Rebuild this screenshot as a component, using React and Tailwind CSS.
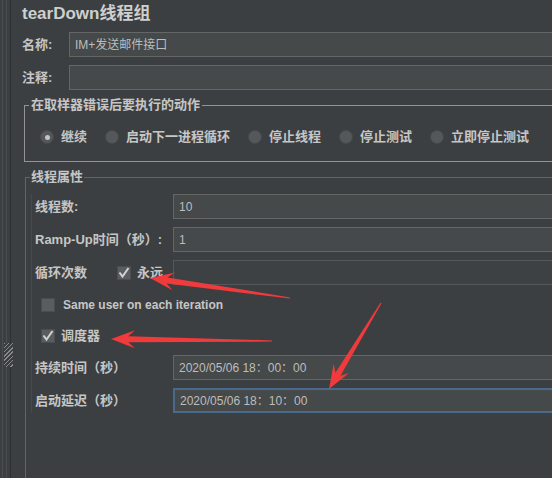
import React from 'react';

const font = "font-['Liberation_Sans','Noto_Sans_CJK_SC',sans-serif]";

// builds a tapered "screenshot tool" arrow from tail to tip
const arrowPoints = (x1, y1, x2, y2) => {
  const dx = x2 - x1;
  const dy = y2 - y1;
  const len = Math.hypot(dx, dy);
  const ux = dx / len;
  const uy = dy / len;
  const nx = -uy;
  const ny = ux;
  const hl = 24;
  const hw = 9;
  const sw = 3;
  const bx = x2 - ux * hl;
  const by = y2 - uy * hl;
  const sx = x2 - ux * hl * 0.72;
  const sy = y2 - uy * hl * 0.72;
  return [
    [x1 + nx * 0.6, y1 + ny * 0.6],
    [sx + nx * sw, sy + ny * sw],
    [bx + nx * hw, by + ny * hw],
    [x2, y2],
    [bx - nx * hw, by - ny * hw],
    [sx - nx * sw, sy - ny * sw],
    [x1 - nx * 0.6, y1 - ny * 0.6],
  ]
    .map(p => p.map(v => v.toFixed(1)).join(','))
    .join(' ');
};

const Radio = ({ checked, label }) => (
  <div className="flex items-center gap-[7px]">
    <span className="w-[14px] h-[14px] rounded-full bg-[#55585a] border border-[#47494b] flex items-center justify-center">
      {checked && <span className="w-[5px] h-[5px] rounded-full bg-[#c4c4c4]" />}
    </span>
    <span className="text-[13px] font-bold text-[#c6c6c6]">{label}</span>
  </div>
);

const Checkbox = ({ checked }) => (
  <span className="w-[14px] h-[14px] shrink-0 bg-[#5a5d5f] border border-[#4b4e50] flex items-center justify-center">
    {checked && (
      <svg width="12" height="12" viewBox="0 0 12 12">
        <polyline points="1.5,5.5 4.5,9.5 10.5,1" fill="none" stroke="#d2d2d2" strokeWidth="2" />
      </svg>
    )}
  </span>
);

const Field = ({ value, focused, disabled }) => {
  let cls = 'bg-[#45494a] border border-[#656767]';
  if (focused) cls = 'bg-[#45494a] border-2 border-[#4a6a8c]';
  if (disabled) cls = 'bg-[#3e4143] border border-[#55585a]';
  return (
    <div className={`flex-1 h-full flex items-center pl-[5px] text-[12px] text-[#bdbdbd] ${cls}`}>
      {value}
    </div>
  );
};

const Row = ({ label, children, className }) => (
  <div className={`flex items-center ${className}`}>
    <div className="w-[138px] shrink-0 text-[13px] font-bold text-[#c6c6c6]">{label}</div>
    {children}
  </div>
);

export default function App() {
  return (
    <div className={`relative w-[552px] h-[478px] overflow-hidden bg-[#3c3f41] flex ${font}`}>
      {/* splitter */}
      <div className="w-[12px] shrink-0 flex">
        <div className="w-[3px] border-r border-[#4b4e50]" />
        <div className="w-[4px] border-r border-[#4b4e50]" />
        <div className="w-[4px] border-r border-[#2e3032]" />
      </div>
      <div className="absolute left-[4px] top-[343px] w-[9px] h-[24px] bg-[repeating-linear-gradient(135deg,#8a8a8a_0px,#8a8a8a_1px,#3c3f41_1px,#3c3f41_3px)]" />

      <div className="w-[600px] shrink-0 pl-[10px]">
        <div className="h-[27px] flex items-center text-[17px] font-bold text-[#cfcfcf]">tearDown线程组</div>

        <div className="mt-[5px] h-[25px] flex items-center">
          <div className="w-[47px] shrink-0 text-[13px] font-bold text-[#c6c6c6]">名称:</div>
          <Field value="IM+发送邮件接口" />
        </div>
        <div className="mt-[8px] h-[25px] flex items-center">
          <div className="w-[47px] shrink-0 text-[13px] font-bold text-[#c6c6c6]">注释:</div>
          <Field value="" />
        </div>

        <fieldset className="mt-[7px] ml-[2px] border border-[#939393] pb-[14px]">
          <legend className="ml-[4px] px-[2px] leading-[16px] text-[13px] font-bold text-[#c6c6c6]">在取样器错误后要执行的动作</legend>
          <div className="mt-[14px] pl-[15px] h-[20px] flex items-center gap-[18px]">
            <Radio checked label="继续" />
            <Radio label="启动下一进程循环" />
            <Radio label="停止线程" />
            <Radio label="停止测试" />
            <Radio label="立即停止测试" />
          </div>
        </fieldset>

        <fieldset className="mt-[7px] ml-[3px] h-[330px] border border-[#626466]">
          <legend className="ml-[4px] px-[1px] leading-[16px] text-[13px] font-bold text-[#c6c6c6]">线程属性</legend>
          <div className="ml-[5px] border-l border-[#47494b] pl-[3px]">
            <Row label="线程数:" className="mt-[9px] h-[25px]">
              <Field value="10" />
            </Row>
            <Row label="Ramp-Up时间（秒）:" className="mt-[8px] h-[25px]">
              <Field value="1" />
            </Row>
            <div className="mt-[8px] h-[25px] flex items-center">
              <div className="w-[82px] shrink-0 text-[13px] font-bold text-[#c6c6c6]">循环次数</div>
              <Checkbox checked />
              <div className="w-[42px] shrink-0 pl-[6px] text-[13px] font-bold text-[#c6c6c6]">永远</div>
              <Field value="" disabled />
            </div>
            <div className="mt-[10px] h-[20px] ml-[6px] flex items-center gap-[8px]">
              <Checkbox />
              <span className="text-[12px] font-bold text-[#c6c6c6]">Same user on each iteration</span>
            </div>
            <div className="mt-[11px] h-[20px] ml-[6px] flex items-center gap-[6px]">
              <Checkbox checked />
              <span className="text-[13px] font-bold text-[#c6c6c6]">调度器</span>
            </div>
            <Row label="持续时间（秒）" className="mt-[9px] h-[25px]">
              <Field value="2020/05/06 18：00：00" />
            </Row>
            <Row label="启动延迟（秒）" className="mt-[8px] h-[25px]">
              <Field value="2020/05/06 18：10：00" focused />
            </Row>
          </div>
        </fieldset>
      </div>

      <svg className="absolute inset-0 pointer-events-none" width="552" height="478">
        <polygon points={arrowPoints(290, 298, 150, 278)} fill="#f03a3c" />
        <polygon points={arrowPoints(272, 341, 111, 339)} fill="#f03a3c" />
        <polygon points={arrowPoints(381, 303, 329, 389)} fill="#f03a3c" />
      </svg>
    </div>
  );
}
